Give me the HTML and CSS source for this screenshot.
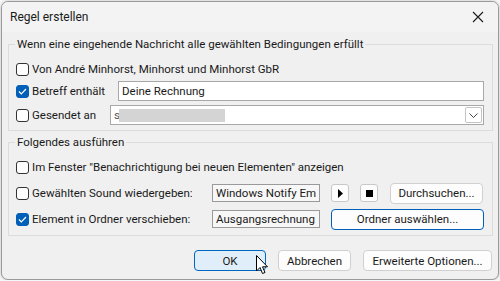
FILE: index.html
```html
<!DOCTYPE html>
<html lang="de">

<head>
    <meta charset="UTF-8">
    <title>Regel erstellen</title>
    <link rel="stylesheet" href="styles.css">
</head>

<body>
    <div class="dialog">
        <div class="titlebar">
            <span class="title">Regel erstellen</span>
            <svg class="close" width="12" height="12" viewBox="0 0 12 12">
                <path d="M1 1 L11 11 M11 1 L1 11" stroke="#1a1a1a" stroke-width="1.1" fill="none" />
            </svg>
        </div>
        <div class="content">
            <fieldset class="group">
                <legend>Wenn eine eingehende Nachricht alle gewählten Bedingungen erfüllt</legend>
                <div class="row r1">
                    <span class="check"></span>
                    <span class="label">Von André Minhorst, Minhorst und Minhorst GbR</span>
                </div>
                <div class="row r2">
                    <span class="check on"><svg width="9" height="7" viewBox="0 0 9 7"><path d="M1 3.5 L3.3 5.8 L8 1" stroke="#fff" stroke-width="1.2" fill="none" /></svg></span>
                    <span class="label w-betreff">Betreff enthält</span>
                    <span class="input text-wide">Deine Rechnung</span>
                </div>
                <div class="row r3">
                    <span class="check"></span>
                    <span class="label w-gesendet">Gesendet an</span>
                    <span class="input combo">
                        <span class="first">s</span><span class="blur"></span>
                        <span class="drop"><svg width="9" height="5" viewBox="0 0 9 5"><path d="M0.5 0.5 L4.5 4.5 L8.5 0.5" stroke="#444" stroke-width="1" fill="none" /></svg></span>
                    </span>
                </div>
            </fieldset>
            <fieldset class="group second">
                <legend>Folgendes ausführen</legend>
                <div class="row r1">
                    <span class="check"></span>
                    <span class="label">Im Fenster "Benachrichtigung bei neuen Elementen" anzeigen</span>
                </div>
                <div class="row r2">
                    <span class="check"></span>
                    <span class="label w-action">Gewählten Sound wiedergeben:</span>
                    <span class="input readonly">Windows Notify Em</span>
                    <span class="mini"><svg width="5" height="9" viewBox="0 0 5 9"><path d="M0 0 L5 4.5 L0 9 Z" fill="#000" /></svg></span>
                    <span class="mini"><span class="square"></span></span>
                    <span class="btn browse">Durchsuchen...</span>
                </div>
                <div class="row r3">
                    <span class="check on"><svg width="9" height="7" viewBox="0 0 9 7"><path d="M1 3.5 L3.3 5.8 L8 1" stroke="#fff" stroke-width="1.2" fill="none" /></svg></span>
                    <span class="label w-action">Element in Ordner verschieben:</span>
                    <span class="input readonly">Ausgangsrechnung</span>
                    <span class="btn folder">Ordner auswählen...</span>
                </div>
            </fieldset>
            <div class="buttons">
                <span class="btn ok">OK</span>
                <span class="btn cancel">Abbrechen</span>
                <span class="btn more">Erweiterte Optionen...</span>
                <svg class="cursor" width="13" height="20" viewBox="0 0 13 20">
                    <path d="M0.5 0.5 L0.5 16 L4 12.5 L6.5 18.5 L9 17.5 L6.5 11.8 L11.5 11.8 Z" fill="#fff" stroke="#000" stroke-width="1" stroke-linejoin="round" />
                </svg>
            </div>
        </div>
    </div>
</body>

</html>
```
FILE: styles.css
```css
* {
    margin: 0;
    padding: 0;
    box-sizing: border-box;
}

body {
    background: #f7f7f9;
    font-family: Roboto, "Noto Sans", sans-serif;
    font-size: 11.5px;
    color: #1a1a1a;
}

.dialog {
    position: relative;
    width: 498px;
    height: 279px;
    margin: 1px 0 0 1px;
    border: 1px solid #9a9a9a;
    border-radius: 7px;
    background: #f0f0f0;
    overflow: hidden;
    box-shadow: 0 0 3px rgba(0, 0, 0, 0.25);
}

.titlebar {
    height: 30px;
    background: #f3f3f3;
    display: flex;
    align-items: center;
    justify-content: space-between;
    padding: 0 14px 0 8px;
}

.title {
    font-size: 12px;
}

.content {
    padding: 0 5px 0 6px;
}

.group {
    border: 1px solid #dcdcdc;
    padding: 7px 7px 5px 7px;
    margin-top: 4px;
}

.group legend {
    line-height: 16px;
    padding: 0 2px;
    margin-left: -1px;
}

.group.second {
    margin-top: 3px;
    padding-bottom: 6px;
}

.row {
    display: flex;
    align-items: center;
    height: 20px;
}

.row.r2 {
    margin-top: 2px;
}

.row.r3 {
    margin-top: 4px;
}

.second .row.r2 {
    margin-top: 6px;
}

.second .row.r3 {
    margin-top: 6px;
}

.check {
    width: 13px;
    height: 13px;
    border: 1px solid #333;
    border-radius: 3px;
    background: #fff;
    margin-right: 3px;
    flex-shrink: 0;
    display: flex;
    align-items: center;
    justify-content: center;
}

.check.on {
    background: #005fb8;
    border-color: #005fb8;
}

.label {
    white-space: nowrap;
    flex-shrink: 0;
}

.w-betreff {
    width: 86px;
}

.w-gesendet {
    width: 78px;
}

.w-action {
    width: 180px;
}

.input {
    height: 20px;
    border: 1px solid #a8a8a8;
    background: #fff;
    display: flex;
    align-items: center;
    padding-left: 3px;
    white-space: nowrap;
    overflow: hidden;
    flex-shrink: 0;
}

.text-wide {
    width: 366px;
}

.combo {
    position: relative;
    width: 374px;
    padding-left: 3px;
}

.combo .first {
    width: 5px;
    overflow: hidden;
    color: #555;
}

.combo .blur {
    width: 106px;
    height: 13px;
    background: #d4d4d4;
}

.combo .drop {
    position: absolute;
    right: 1px;
    top: 1px;
    width: 17px;
    height: 16px;
    border: 1px solid #c4c4c4;
    border-radius: 2px;
    background: #fff;
    display: flex;
    align-items: center;
    justify-content: center;
}

.readonly {
    width: 108px;
    height: 18px;
    background: #f7f7f7;
    border-color: #9a9a9a;
    padding-left: 3px;
}

.mini {
    width: 18px;
    height: 18px;
    border: 1px solid #c8c8c8;
    border-radius: 3px;
    background: #fdfdfd;
    margin-left: 11px;
    display: flex;
    align-items: center;
    justify-content: center;
    flex-shrink: 0;
}

.mini .square {
    width: 7px;
    height: 7px;
    background: #000;
}

.btn {
    display: flex;
    align-items: center;
    justify-content: center;
    height: 21px;
    border: 1px solid #d0d0d0;
    border-radius: 4px;
    background: #fdfdfd;
    white-space: nowrap;
    flex-shrink: 0;
}

.browse {
    width: 93px;
    margin-left: 12px;
}

.folder {
    width: 153px;
    margin-left: 11px;
    border-color: #005fb8;
}

.buttons {
    position: relative;
    display: flex;
    justify-content: flex-end;
    margin-top: 14px;
    padding-right: 1px;
}

.ok {
    width: 72px;
    background: #e0eef9;
    border-color: #0067c0;
}

.cancel {
    width: 73px;
    margin-left: 12px;
}

.more {
    width: 129px;
    margin-left: 12px;
}

.cursor {
    position: absolute;
    left: 248px;
    top: 5px;
}
```
